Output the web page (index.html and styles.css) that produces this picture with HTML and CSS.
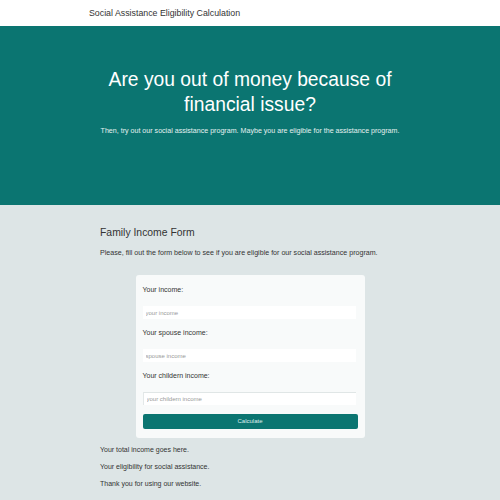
FILE: index.html
```html
<!DOCTYPE html>
<html>
<head>
<meta charset="utf-8">
<link rel="stylesheet" href="styles.css">
</head>
<body>
<header class="topbar"><span class="brand">Social Assistance Eligibility Calculation</span></header>
<section class="hero">
  <h1 class="hero-title">Are you out of money because of<br>financial issue?</h1>
  <p class="hero-sub">Then, try out our social assistance program. Maybe you are eligible for the assistance program.</p>
</section>
<main class="main">
  <h2 class="form-title">Family Income Form</h2>
  <p class="intro">Please, fill out the form below to see if you are eligible for our social assistance program.</p>
  <form class="card">
    <label class="label">Your income:</label>
    <input class="field" type="text" placeholder="your income">
    <label class="label">Your spouse income:</label>
    <input class="field" type="text" placeholder="spouse income">
    <label class="label">Your childern income:</label>
    <input class="field field-last" type="text" placeholder="your childern income">
    <button class="btn" type="button">Calculate</button>
  </form>
  <p class="result">Your total income goes here.</p>
  <p class="result">Your eligibility for social assistance.</p>
  <p class="result">Thank you for using our website.</p>
</main>
</body>
</html>
```
FILE: styles.css
```css
* { box-sizing: border-box; }
html, body { margin: 0; padding: 0; }
body {
  font-family: "Liberation Sans", Arial, sans-serif;
  background: #dde5e6;
  color: #333;
}
.topbar {
  height: 26px;
  background: #fff;
  display: flex;
  align-items: center;
  padding-left: 89px;
}
.brand { font-size: 8.8px; color: #333; }
.hero {
  height: 179px;
  background: #0b7571;
  color: #fff;
  text-align: center;
  padding-top: 41px;
}
.hero-title {
  margin: 0;
  font-weight: normal;
  font-size: 19.3px;
  line-height: 25px;
}
.hero-sub {
  margin: 10px 0 0;
  font-size: 7.1px;
  line-height: 9px;
  color: #e6f1f0;
}
.main {
  width: 300px;
  margin: 0 auto;
  padding-top: 21px;
  display: flex;
  flex-direction: column;
}
.form-title {
  margin: 0;
  font-weight: normal;
  font-size: 10.4px;
  line-height: 14px;
}
.intro {
  margin: 9px 0 0;
  font-size: 7.1px;
  line-height: 9px;
}
.card {
  margin: 17px auto 0;
  width: 229px;
  background: #f8fafa;
  border-radius: 3px;
  padding: 10px 7px 9px;
  display: flex;
  flex-direction: column;
}
.label {
  font-size: 7px;
  line-height: 9px;
  color: #333;
}
.field {
  margin: 12px 0 9px;
  height: 13px;
  width: 213px;
  border: none;
  background: #fff;
  padding: 0 3px;
  font-family: inherit;
  font-size: 6px;
  color: #333;
}
.field::placeholder { color: #999; }
.field-last {
  border-top: 1px solid #e0e6e6;
  border-left: 1px solid #e3e8e8;
  margin-bottom: 8.5px;
}
.btn {
  height: 15px;
  width: 215px;
  border: none;
  border-radius: 2px;
  background: #0b7571;
  color: #dfeeee;
  font-family: inherit;
  font-size: 6px;
}
.result {
  margin: 0;
  margin-top: 8px;
  font-size: 7px;
  line-height: 9px;
}
.card + .result { margin-top: 7px; }
```
